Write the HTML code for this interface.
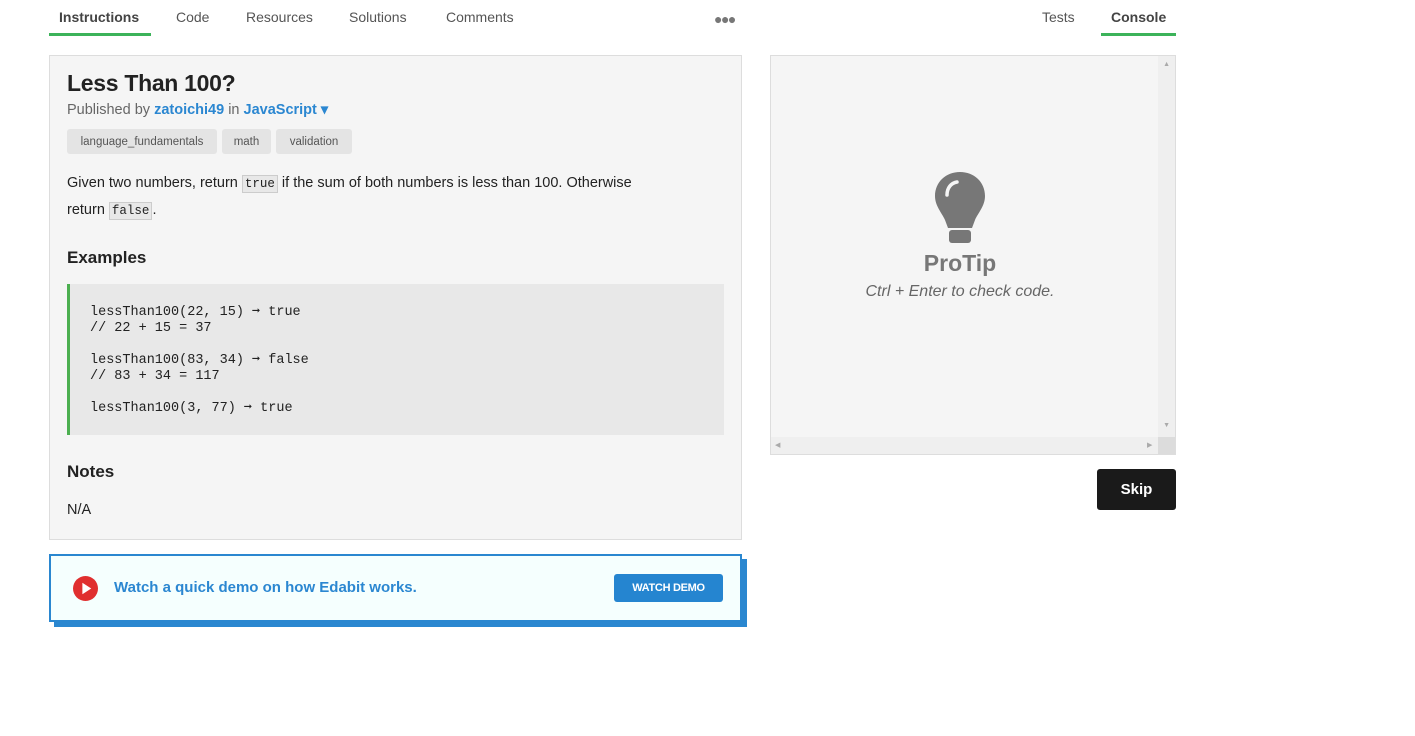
<!DOCTYPE html>
<html><head><meta charset="utf-8"><style>
*{box-sizing:border-box;margin:0;padding:0}
body{width:1415px;height:736px;background:#fff;font-family:"Liberation Sans",sans-serif;color:#222;position:relative;overflow:hidden}
.abs{position:absolute}
.tab{position:absolute;top:9px;font-size:14px;color:#555}
.ul{position:absolute;top:33px;height:3px;background:#3cb35a}
.left{left:49px;top:55px;width:693px;height:485px;background:#f5f5f5;border:1px solid #ddd}
h1{position:absolute;left:17px;top:14px;font-size:23px;font-weight:bold;color:#222;letter-spacing:-0.3px}
.pub{position:absolute;left:17px;top:46px;font-size:14.5px;color:#666}
.pub b{color:#2b87d1}
.tag{position:absolute;top:73px;height:25px;background:#e4e4e4;border-radius:3px;font-size:11.5px;color:#555;line-height:26px;text-align:center}
.p{position:absolute;left:17px;top:114px;font-size:14.5px;line-height:26px;color:#222;width:620px}
code{font-family:"Liberation Mono",monospace;font-size:12.5px;background:#e8e8e8;border:1px solid #ccc;padding:1px 2px}
h3{position:absolute;left:17px;font-size:17px;font-weight:bold;color:#222}
pre{position:absolute;left:17px;top:228px;width:657px;height:151px;background:#e8e8e8;border-left:3px solid #4caf50;font-family:"Liberation Mono",monospace;font-size:13.5px;line-height:16px;padding:21px 20px;color:#222}
.right{left:770px;top:55px;width:406px;height:400px;background:#f5f5f5;border:1px solid #ddd}
</style></head><body>
<div class="tab" style="left:59px;font-weight:bold;color:#444">Instructions</div>
<div class="ul" style="left:49px;width:102px"></div>
<div class="tab" style="left:176px">Code</div>
<div class="tab" style="left:246px">Resources</div>
<div class="tab" style="left:349px">Solutions</div>
<div class="tab" style="left:446px">Comments</div>
<div class="tab" style="left:714px;top:11px;font-size:14px;letter-spacing:-1.5px;color:#777">●●●</div>
<div class="tab" style="left:1042px">Tests</div>
<div class="tab" style="left:1111px;font-weight:bold;color:#444">Console</div>
<div class="ul" style="left:1101px;width:75px"></div>

<div class="abs left">
<h1>Less Than 100?</h1>
<div class="pub">Published by <b>zatoichi49</b> in <b>JavaScript ▾</b></div>
<div class="tag" style="left:17px;width:150px">language_fundamentals</div>
<div class="tag" style="left:172px;width:49px">math</div>
<div class="tag" style="left:226px;width:76px">validation</div>
<div class="p">Given two numbers, return <code>true</code> if the sum of both numbers is less than 100. Otherwise<br>return <code>false</code>.</div>
<h3 style="top:192px">Examples</h3>
<pre>lessThan100(22, 15) ➞ true
// 22 + 15 = 37

lessThan100(83, 34) ➞ false
// 83 + 34 = 117

lessThan100(3, 77) ➞ true</pre>
<h3 style="top:406px">Notes</h3>
<div class="abs" style="left:17px;top:446px;font-size:14.5px">N/A</div>
</div>

<div class="abs" style="left:54px;top:559px;width:693px;height:68px;background:#2a87d0"></div>
<div class="abs" style="left:49px;top:554px;width:693px;height:68px;background:#f5fffe;border:2px solid #2a87d0">
<svg class="abs" style="left:22px;top:20px" width="25" height="25" viewBox="0 0 24 24"><circle cx="12" cy="12" r="12" fill="#e02f2f"/><path d="M9 6.5L17.5 12L9 17.5Z" fill="#fff"/></svg>
<div class="abs" style="left:63px;top:23px;font-size:15px;font-weight:bold;color:#2b87d1">Watch a quick demo on how Edabit works.</div>
<div class="abs" style="left:563px;top:18px;width:109px;height:28px;background:#2585d0;border-radius:3px;color:#fff;font-size:11px;font-weight:bold;line-height:28px;text-align:center;letter-spacing:-0.3px">WATCH DEMO</div>
</div>

<div class="abs right">
<div class="abs" style="right:0;top:0;width:17px;height:382px;background:#efefef"></div>
<div class="abs" style="left:0;bottom:0;width:388px;height:17px;background:#efefef"></div>
<div class="abs" style="right:0;bottom:0;width:17px;height:17px;background:#dcdcdc"></div>
<div class="abs" style="right:5px;top:5px;font-size:7px;color:#aaa">▲</div>
<div class="abs" style="right:5px;top:366px;font-size:7px;color:#aaa">▼</div>
<div class="abs" style="left:4px;top:385px;font-size:7px;color:#aaa">◀</div>
<div class="abs" style="left:376px;top:385px;font-size:7px;color:#aaa">▶</div>
<svg class="abs" style="left:163px;top:115px" width="52" height="73" viewBox="0 0 52 73"><path d="M26 1C12 1 1 11 1 25c0 10 7 17 10 24l3 8h24l3-8c3-7 10-14 10-24C51 11 40 1 26 1Z" fill="#777"/><path d="M13 24c0-7 4-12 10-13" stroke="#f5f5f5" stroke-width="3.5" fill="none" stroke-linecap="round"/><rect x="15" y="59" width="22" height="13" rx="3" fill="#777"/></svg>
<div class="abs" style="left:0;width:378px;top:194px;text-align:center;font-size:23px;font-weight:bold;color:#777">ProTip</div>
<div class="abs" style="left:0;width:378px;top:227px;text-align:center;font-size:16px;font-style:italic;color:#666">Ctrl + Enter to check code.</div>
</div>

<div class="abs" style="left:1097px;top:469px;width:79px;height:41px;background:#1a1a1a;border-radius:3px;color:#fff;font-weight:bold;font-size:15px;line-height:41px;text-align:center">Skip</div>
</body></html>
